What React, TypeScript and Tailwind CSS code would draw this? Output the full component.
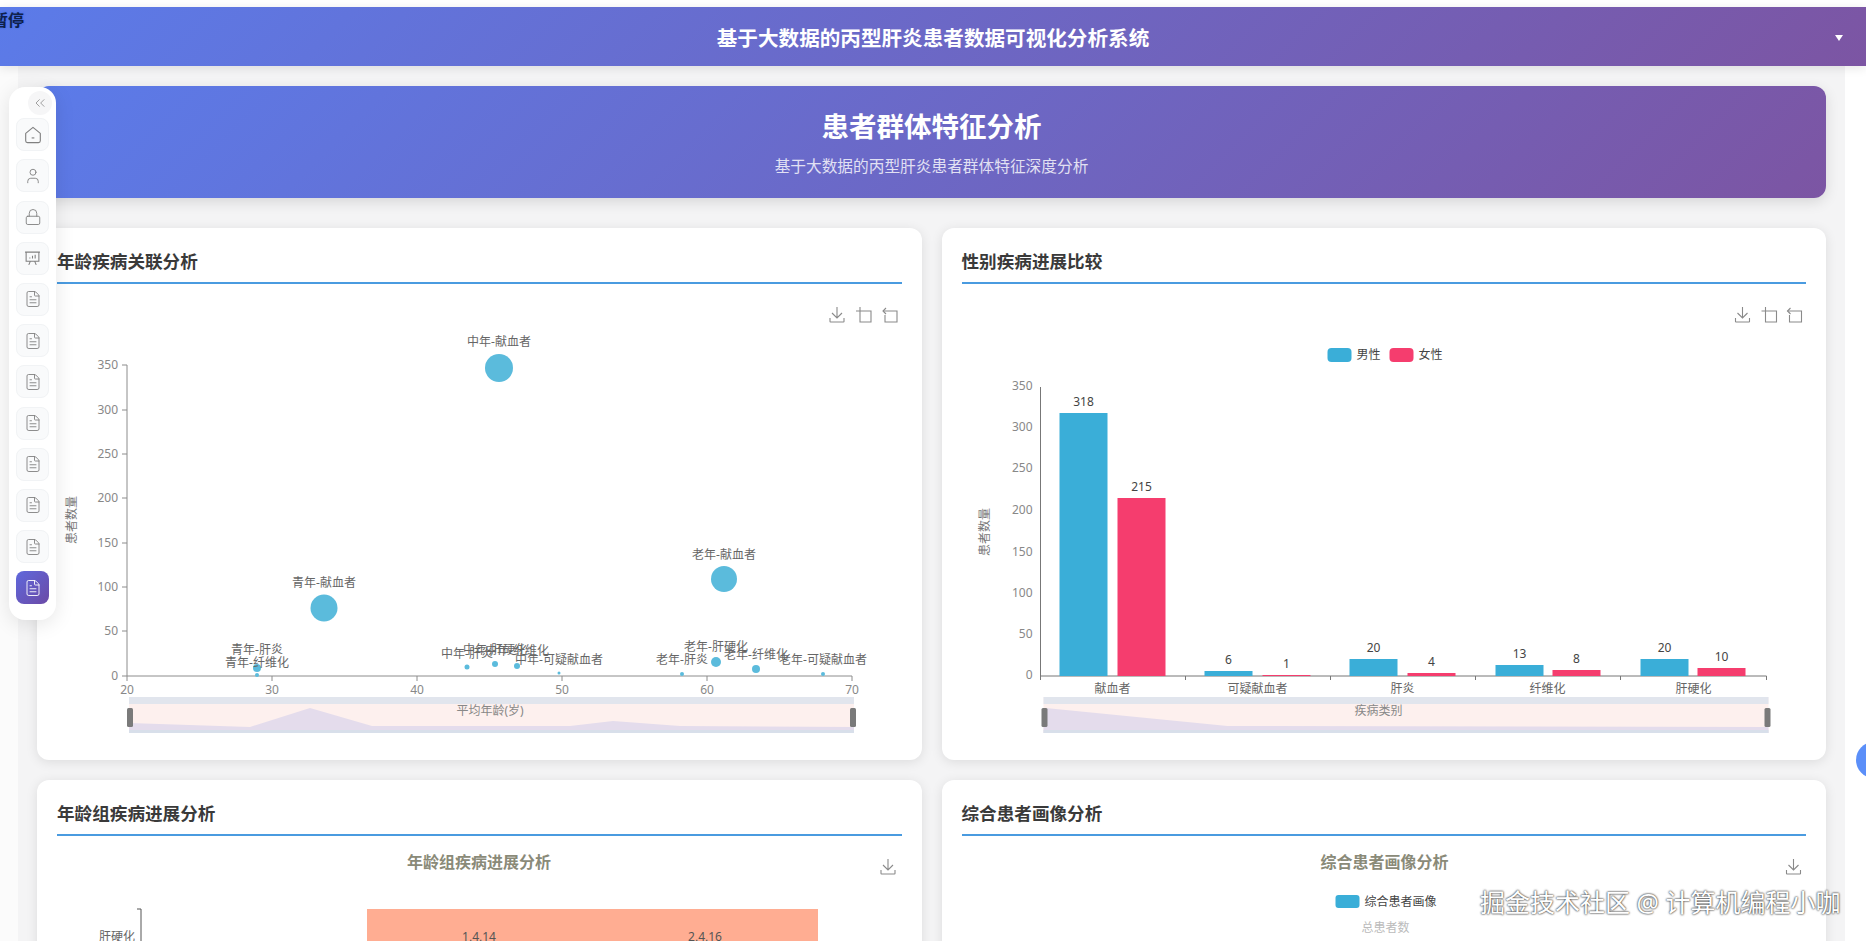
import { ChevronsLeft, FileText, Lock, User } from "lucide-react";

const bubbles = [
  { name: "中年-献血者", x: 499, y: 368, r: 14, ly: 341 },
  { name: "青年-献血者", x: 324, y: 608, r: 13.5, ly: 582 },
  { name: "老年-献血者", x: 724, y: 579, r: 13, ly: 554 },
  { name: "青年-肝炎", x: 257, y: 668, r: 4, ly: 649 },
  { name: "青年-纤维化", x: 257, y: 675, r: 2, ly: 662 },
  { name: "中年-肝硬化", x: 495, y: 664, r: 3, ly: 649 },
  { name: "中年-肝炎", x: 467, y: 667, r: 2.5, ly: 653 },
  { name: "中年-纤维化", x: 517, y: 666, r: 3, ly: 650 },
  { name: "中年-可疑献血者", x: 559, y: 673, r: 1.5, ly: 659 },
  { name: "老年-肝炎", x: 682, y: 674, r: 2, ly: 659 },
  { name: "老年-肝硬化", x: 716, y: 662, r: 5, ly: 646 },
  { name: "老年-纤维化", x: 756, y: 669, r: 4, ly: 654 },
  { name: "老年-可疑献血者", x: 823, y: 674, r: 2, ly: 659 },
];

const bars = [
  { label: "献血者", cx: 1112, male: 318, maleTop: 413, female: 215, femaleTop: 498, x1: 1059, x2: 1117 },
  { label: "可疑献血者", cx: 1257, male: 6, maleTop: 671, female: 1, femaleTop: 675, x1: 1204, x2: 1262 },
  { label: "肝炎", cx: 1402, male: 20, maleTop: 659, female: 4, femaleTop: 673, x1: 1349, x2: 1407 },
  { label: "纤维化", cx: 1547, male: 13, maleTop: 665, female: 8, femaleTop: 670, x1: 1495, x2: 1552 },
  { label: "肝硬化", cx: 1693, male: 20, maleTop: 659, female: 10, femaleTop: 668, x1: 1640, x2: 1697 },
];

const yTicks1 = [
  { v: 350, y: 365 },
  { v: 300, y: 410 },
  { v: 250, y: 454 },
  { v: 200, y: 498 },
  { v: 150, y: 543 },
  { v: 100, y: 587 },
  { v: 50, y: 631 },
  { v: 0, y: 676 },
];

const xTicks1 = [
  { v: 20, x: 127 },
  { v: 30, x: 272 },
  { v: 40, x: 417 },
  { v: 50, x: 562 },
  { v: 60, x: 707 },
  { v: 70, x: 852 },
];

const yTicks2 = [
  { v: 350, y: 385 },
  { v: 300, y: 426 },
  { v: 250, y: 467 },
  { v: 200, y: 509 },
  { v: 150, y: 551 },
  { v: 100, y: 592 },
  { v: 50, y: 633 },
  { v: 0, y: 674 },
];

const HomeIcon = () => (
  <svg width="18" height="18" viewBox="0 0 16 16" fill="none" stroke="#808080" strokeWidth="1">
    <path d="M1.5 6.6 8 1.2l6.5 5.4v6.6a1.6 1.6 0 0 1-1.6 1.6H3.1a1.6 1.6 0 0 1-1.6-1.6z" strokeLinejoin="round" />
    <path d="M6.8 10.6h2.4" />
  </svg>
);

const BoardIcon = () => (
  <svg width="17" height="17" viewBox="0 0 16 16" fill="none" stroke="#808080" strokeWidth="1">
    <path d="M1 2h14M2 2v8.5h12V2M6 10.5 4.5 14M10 10.5l1.5 3.5" />
    <path d="M5.5 8V7M8 8V5.5M10.5 8V4.5" />
  </svg>
);

const DownloadIcon = ({ x, y }: { x: number; y: number }) => (
  <g transform={`translate(${x} ${y})`} fill="none" stroke="#8a8a8a" strokeWidth="1.1">
    <path d="M0-8V3M-5-2 0 3 5-2" />
    <path d="M-7 3v3.5a.5.5 0 0 0 .5.5h13a.5.5 0 0 0 .5-.5V3" />
  </g>
);

const ZoomIcon = ({ x, y }: { x: number; y: number }) => (
  <g transform={`translate(${x} ${y})`} fill="none" stroke="#8a8a8a" strokeWidth="1.1">
    <path d="M-4-8V7H7V-4H-8" />
  </g>
);

const RestoreIcon = ({ x, y }: { x: number; y: number }) => (
  <g transform={`translate(${x} ${y})`} fill="none" stroke="#8a8a8a" strokeWidth="1.1">
    <path d="M-7-4H7V7H-5V0" />
    <path d="M-4-7-7-4-4-1" />
  </g>
);

const DataZoom = ({ x1, x2, shadow, labelX, label }: { x1: number; x2: number; shadow: string; labelX: number; label: string }) => (
  <g>
    <rect x={x1} y={697} width={x2 - x1} height={36} fill="#fdf0ee" />
    <polygon points={shadow} fill="#e4dcec" />
    <rect x={x1} y={697} width={x2 - x1} height={7} fill="#e1e5ed" />
    <rect x={x1} y={730} width={x2 - x1} height={3} fill="#d8dfea" />
    <rect x={x1 - 2} y={708} width={6} height={19} rx={1.5} fill="#7a7a7a" />
    <rect x={x2 - 4} y={708} width={6} height={19} rx={1.5} fill="#7a7a7a" />
    <text x={labelX} y={710} textAnchor="middle" dominantBaseline="central" fontSize="12" fill="#888">
      {label}
    </text>
  </g>
);

const BubbleChart = () => (
  <svg className="block" width="845" height="456" viewBox="57 284 845 456">
    <DownloadIcon x={837} y={315} />
    <ZoomIcon x={864} y={315} />
    <RestoreIcon x={890} y={315} />
    <text transform="translate(71 520) rotate(-90)" textAnchor="middle" dominantBaseline="central" fontSize="12" fill="#777">
      患者数量
    </text>
    <path d="M127 365V676H852" fill="none" stroke="#8c8c8c" strokeWidth="1" />
    {yTicks1.map((t) => (
      <g key={t.v}>
        <path d={`M122 ${t.y}h5`} stroke="#8c8c8c" />
        <text x={118} y={t.y - 1} textAnchor="end" dominantBaseline="central" fontSize="12" fill="#888">
          {t.v}
        </text>
      </g>
    ))}
    {xTicks1.map((t) => (
      <g key={t.v}>
        <path d={`M${t.x} 676v5`} stroke="#8c8c8c" />
        <text x={t.x} y={689} textAnchor="middle" dominantBaseline="central" fontSize="12" fill="#888">
          {t.v}
        </text>
      </g>
    ))}
    {bubbles.map((b) => (
      <circle key={b.name} cx={b.x} cy={b.y} r={b.r} fill="#5bbbdc" />
    ))}
    {bubbles.map((b) => (
      <text key={b.name} x={b.x} y={b.ly} textAnchor="middle" dominantBaseline="central" fontSize="12" fill="#666">
        {b.name}
      </text>
    ))}
    <DataZoom
      x1={129}
      x2={854}
      labelX={490}
      label="平均年龄(岁)"
      shadow="129,723 250,727 310,708 372,726 570,726 613,721 680,726 854,727 854,733 129,733"
    />
  </svg>
);

const BarChart = () => (
  <svg className="block" width="845" height="456" viewBox="961.5 284 845 456">
    <DownloadIcon x={1742} y={315} />
    <ZoomIcon x={1769} y={315} />
    <RestoreIcon x={1794} y={315} />
    <rect x={1327} y={348} width={24} height={14} rx={4} fill="#3aaed8" />
    <text x={1356} y={354} dominantBaseline="central" fontSize="12" fill="#444">
      男性
    </text>
    <rect x={1389} y={348} width={24} height={14} rx={4} fill="#f53d6e" />
    <text x={1418} y={354} dominantBaseline="central" fontSize="12" fill="#444">
      女性
    </text>
    <text transform="translate(984 532) rotate(-90)" textAnchor="middle" dominantBaseline="central" fontSize="12" fill="#777">
      患者数量
    </text>
    <path d="M1040 387V676H1766" fill="none" stroke="#777" strokeWidth="1" />
    {[1040, 1185, 1330, 1475, 1620, 1766].map((x) => (
      <path key={x} d={`M${x} 676v4`} stroke="#777" />
    ))}
    {yTicks2.map((t) => (
      <text key={t.v} x={1032} y={t.y} textAnchor="end" dominantBaseline="central" fontSize="12" fill="#888">
        {t.v}
      </text>
    ))}
    {bars.map((b) => (
      <g key={b.label}>
        <rect x={b.x1} y={b.maleTop} width={48} height={676 - b.maleTop} fill="#3aaed8" />
        <rect x={b.x2} y={b.femaleTop} width={48} height={676 - b.femaleTop} fill="#f53d6e" />
        <text x={b.x1 + 24} y={b.maleTop - 12} textAnchor="middle" dominantBaseline="central" fontSize="12" fill="#444">
          {b.male}
        </text>
        <text x={b.x2 + 24} y={b.femaleTop - 12} textAnchor="middle" dominantBaseline="central" fontSize="12" fill="#444">
          {b.female}
        </text>
        <text x={b.cx} y={688} textAnchor="middle" dominantBaseline="central" fontSize="12" fill="#666">
          {b.label}
        </text>
      </g>
    ))}
    <DataZoom
      x1={1043}
      x2={1768}
      labelX={1378}
      label="疾病类别"
      shadow="1045,708 1227,726 1768,727 1768,733 1043,733 1043,708"
    />
  </svg>
);

const HeatmapChart = () => (
  <svg className="block" width="845" height="456" viewBox="57 836 845 456">
    <text x={479} y={862} textAnchor="middle" dominantBaseline="central" fontSize="16" fontWeight="700" fill="#8a8a78">
      年龄组疾病进展分析
    </text>
    <DownloadIcon x={888} y={867} />
    <path d="M137 909h4V1200" fill="none" stroke="#555" />
    <text x={135} y={936} textAnchor="end" dominantBaseline="central" fontSize="12" fill="#666">
      肝硬化
    </text>
    <rect x={367} y={909} width={451} height={120} fill="#ffad92" />
    <text x={479} y={936} textAnchor="middle" dominantBaseline="central" fontSize="12" fill="#555">
      1,4,14
    </text>
    <text x={705} y={936} textAnchor="middle" dominantBaseline="central" fontSize="12" fill="#555">
      2,4,16
    </text>
  </svg>
);

const PortraitChart = () => (
  <svg className="block" width="845" height="456" viewBox="961.5 836 845 456">
    <text x={1384} y={862} textAnchor="middle" dominantBaseline="central" fontSize="16" fontWeight="700" fill="#8a8a78">
      综合患者画像分析
    </text>
    <DownloadIcon x={1793} y={867} />
    <rect x={1335} y={895} width={24} height={13} rx={3} fill="#3aaed8" />
    <text x={1364} y={901} dominantBaseline="central" fontSize="12" fill="#444">
      综合患者画像
    </text>
    <text x={1385} y={927} textAnchor="middle" dominantBaseline="central" fontSize="12" fill="#bbb">
      总患者数
    </text>
  </svg>
);

const ChartCard = ({ title, children }: { title: string; children: React.ReactNode }) => (
  <div className="rounded-xl bg-white p-5 shadow-[0_2px_12px_rgba(0,0,0,0.1)]">
    <h3 className="border-b-2 border-[#4a9be0] pb-2 text-[17.6px] leading-[26px] font-bold text-[#3a3a3a]">{title}</h3>
    {children}
  </div>
);

const App = () => {
  return (
    <div className="relative h-[941px] w-[1866px] overflow-hidden bg-white font-['Noto_Sans','Noto_Sans_CJK_SC',sans-serif]">
      <div className="pt-[7px]">
        <header className="relative z-10 flex h-[59px] items-center justify-center bg-[linear-gradient(135deg,#5b7be9_0%,#7c55a3_100%)] pt-[3px] shadow-[0_2px_10px_rgba(0,0,0,0.1)]">
          <span className="text-[20.6px] font-bold text-white">基于大数据的丙型肝炎患者数据可视化分析系统</span>
          <span className="absolute right-[23px] top-[28px] h-0 w-0 border-x-[4px] border-t-[6px] border-x-transparent border-t-white" />
        </header>

        <div className="flex">
          <div className="w-[18px] bg-[#fbfbfb]" />
          <main className="h-[875px] flex-1 bg-[#f4f4f5] px-[19px] pt-5">
            <section className="flex h-[112px] flex-col items-center justify-center rounded-xl bg-[linear-gradient(135deg,#5b7be9_0%,#7c55a3_100%)] text-white shadow-[0_4px_14px_rgba(0,0,0,0.12)]">
              <h1 className="text-[27.5px] leading-[40px] font-bold">患者群体特征分析</h1>
              <p className="mt-2 text-[15.7px] leading-[22px] opacity-80">基于大数据的丙型肝炎患者群体特征深度分析</p>
            </section>

            <div className="mt-[30px] grid grid-cols-2 gap-5">
              <ChartCard title="年龄疾病关联分析">
                <BubbleChart />
              </ChartCard>
              <ChartCard title="性别疾病进展比较">
                <BarChart />
              </ChartCard>
              <ChartCard title="年龄组疾病进展分析">
                <HeatmapChart />
              </ChartCard>
              <ChartCard title="综合患者画像分析">
                <PortraitChart />
              </ChartCard>
            </div>
          </main>
          <div className="w-[21px] bg-white" />
        </div>
      </div>

      <aside className="absolute left-[9px] top-[87px] z-20 flex h-[533px] w-[47px] flex-col items-center gap-[8.2px] rounded-2xl bg-white pt-1 shadow-[0_4px_20px_rgba(0,0,0,0.1)]">
        <button className="mb-[-5px] ml-[14px] flex h-6 w-6 items-center justify-center rounded-full bg-[#f6f6f7] text-[#999]">
          <ChevronsLeft size={16} strokeWidth={1.4} />
        </button>
        {Array.from({ length: 11 }).map((_, i) => (
          <div key={i} className="flex h-[33px] w-[33px] shrink-0 items-center justify-center rounded-lg border border-[#f1f3f5] bg-[#f9fafb] text-[#808080]">
            {i === 0 && <HomeIcon />}
            {i === 1 && <User size={18} strokeWidth={1.2} />}
            {i === 2 && <Lock size={18} strokeWidth={1.2} />}
            {i === 3 && <BoardIcon />}
            {i > 3 && <FileText size={18} strokeWidth={1.2} />}
          </div>
        ))}
        <div className="flex h-[33px] w-[33px] shrink-0 items-center justify-center rounded-lg bg-[linear-gradient(135deg,#5f68dc,#6b4aa6)] text-white">
          <FileText size={18} strokeWidth={1.2} />
        </div>
      </aside>

      <span className="absolute left-[-8px] top-2 z-30 text-[16px] font-bold text-[#10204a] [text-shadow:0_0_2px_#3f6ee8,0_0_2px_#3f6ee8]">暂停</span>
      <div className="absolute right-[-26px] top-[742px] z-30 h-9 w-9 rounded-full bg-[#5b8ff9]" />
      <span className="absolute left-[1480px] top-[884px] z-30 whitespace-nowrap text-[25px] leading-[36px] text-white [text-shadow:0_0_2px_#444,0_0_2px_#444]">
        掘金技术社区 @ 计算机编程小咖
      </span>
    </div>
  );
};

export default App;
